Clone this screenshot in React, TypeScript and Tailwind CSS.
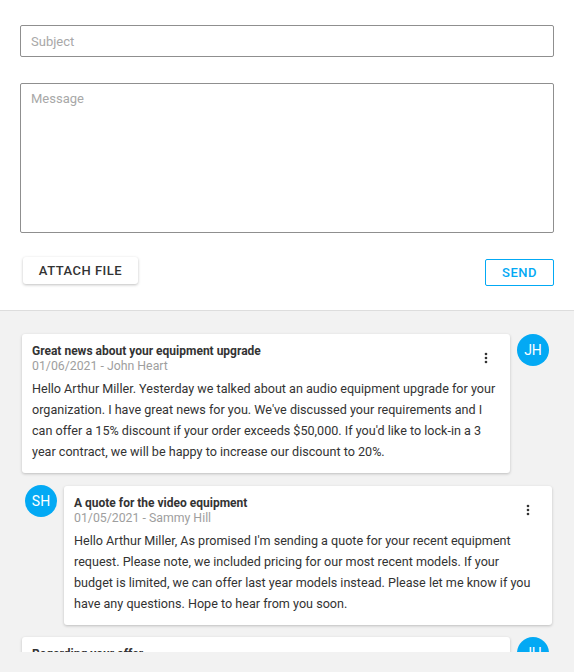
const messages = [
	{
		id: 1,
		title: "Great news about your equipment upgrade",
		date: "01/06/2021",
		author: "John Heart",
		initials: "JH",
		mine: false,
		lines: [
			"Hello Arthur Miller. Yesterday we talked about an audio equipment upgrade for your",
			"organization. I have great news for you. We've discussed your requirements and I",
			"can offer a 15% discount if your order exceeds $50,000. If you'd like to lock-in a 3",
			"year contract, we will be happy to increase our discount to 20%.",
		],
	},
	{
		id: 2,
		title: "A quote for the video equipment",
		date: "01/05/2021",
		author: "Sammy Hill",
		initials: "SH",
		mine: true,
		lines: [
			"Hello Arthur Miller, As promised I'm sending a quote for your recent equipment",
			"request. Please note, we included pricing for our most recent models. If your",
			"budget is limited, we can offer last year models instead. Please let me know if you",
			"have any questions. Hope to hear from you soon.",
		],
	},
	{
		id: 3,
		title: "Regarding your offer",
		date: "01/04/2021",
		author: "John Heart",
		initials: "JH",
		mine: false,
		lines: [
			"Hello Arthur Miller. Thank you for getting back to me so quickly. Let me review",
			"the details and I will follow up with you shortly.",
		],
	},
];

function MoreIcon() {
	return (
		<svg width="16" height="16" viewBox="0 0 24 24" fill="#333">
			<circle cx="12" cy="6" r="2" />
			<circle cx="12" cy="12" r="2" />
			<circle cx="12" cy="18" r="2" />
		</svg>
	);
}

function Avatar({ initials }: { initials: string }) {
	return (
		<div className="flex h-8 w-8 shrink-0 items-center justify-center rounded-full bg-[#03a9f4] text-[14px] text-white">
			{initials}
		</div>
	);
}

function MessageCard({ msg }: { msg: (typeof messages)[number] }) {
	return (
		<div className="relative w-[488px] shrink-0 rounded-[3px] bg-white px-[10px] pt-[10px] pb-[11px] shadow-[0_1px_3px_rgba(0,0,0,0.22)]">
			<div className="text-[12px] leading-[15px] font-bold text-[#333]">
				{msg.title}
			</div>
			<div className="text-[12.3px] leading-[15px] text-[#9e9e9e]">
				{msg.date} - {msg.author}
			</div>
			<div className="mt-[4px] text-[12.6px] leading-[21px] text-[#333]">
				{msg.lines.map((line) => (
					<div key={line} className="whitespace-nowrap">
						{line}
					</div>
				))}
			</div>
			<div className="absolute top-[16px] right-[16px]">
				<MoreIcon />
			</div>
		</div>
	);
}

export default function App() {
	return (
		<div
			className="flex h-[672px] w-[574px] flex-col overflow-hidden bg-[#f2f2f2]"
			style={{ fontFamily: "Roboto, 'Liberation Sans', sans-serif" }}
		>
			<div className="shrink-0 border-b border-[#dddddd] bg-white px-[20px] pt-[25px] pb-[24px]">
				<input
					placeholder="Subject"
					className="block h-[32px] w-full rounded-[2px] border border-[#8f8f8f] px-[10px] text-[13px] text-[#333] outline-none placeholder:text-[#a8a8a8]"
				/>
				<textarea
					placeholder="Message"
					className="mt-[26px] block h-[150px] w-full resize-none rounded-[2px] border border-[#8f8f8f] px-[10px] py-[5px] text-[13px] text-[#333] outline-none placeholder:text-[#a8a8a8]"
				/>
				<div className="mt-[24px] flex items-start justify-between">
					<button
						type="button"
						className="ml-[3px] h-[27px] w-[115px] rounded-[3px] bg-white text-[13px] font-medium tracking-[0.5px] text-[#333] shadow-[0_1px_3px_rgba(0,0,0,0.25)]"
					>
						ATTACH FILE
					</button>
					<button
						type="button"
						className="mt-[2px] h-[27px] w-[69px] rounded-[2px] border border-[#03a9f4] bg-white text-[13px] font-medium tracking-[0.5px] text-[#03a9f4]"
					>
						SEND
					</button>
				</div>
			</div>
			<div className="mb-[20px] flex-1 overflow-hidden">
				<div className="flex flex-col gap-[12px] px-[22px] pt-[23px]">
					{messages.map((msg) =>
						msg.mine ? (
							<div key={msg.id} className="mt-[1px] flex items-start">
								<div className="-mt-[1px] ml-[3px] mr-[7px]">
									<Avatar initials={msg.initials} />
								</div>
								<MessageCard msg={msg} />
							</div>
						) : (
							<div key={msg.id} className="flex items-start">
								<MessageCard msg={msg} />
								<div className="ml-[7px]">
									<Avatar initials={msg.initials} />
								</div>
							</div>
						),
					)}
				</div>
			</div>
		</div>
	);
}
